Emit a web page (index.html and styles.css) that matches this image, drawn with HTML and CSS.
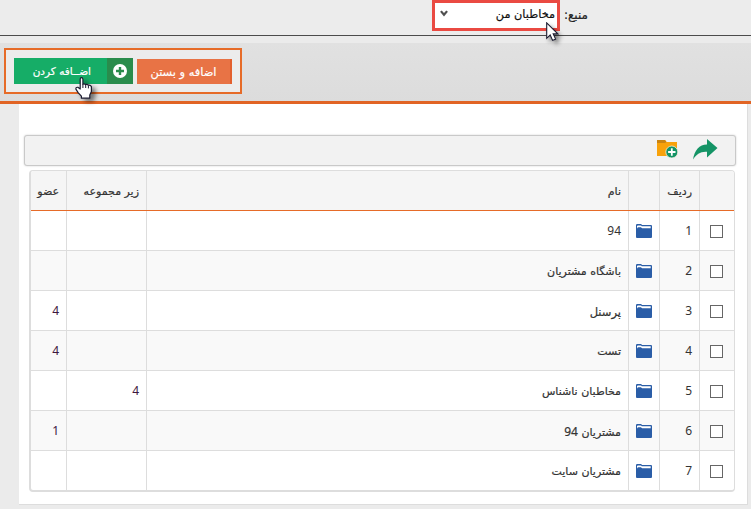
FILE: index.html
```html
<!DOCTYPE html>
<html lang="fa" dir="rtl">
<head>
<meta charset="utf-8">
<title>مخاطبان من</title>
<link rel="stylesheet" href="styles.css">
</head>
<body>
<svg class="defs" width="0" height="0">
  <symbol id="folder" viewBox="0 0 16 14">
    <path fill="#2a5da7" d="M0 1.2Q0 0 1.2 0H4.6Q5.6 0 6 1.1H15Q16 1.1 16 2.2V13Q16 14 15 14H1Q0 14 0 13Z"/>
    <path fill="#fff" d="M1 4.3V2.2Q1 1.4 2 1.4H4.7Q5.4 1.4 5.8 2.3H14.7V4.2H6.2Q5.5 4.2 5.1 3.2H2.2Q1.4 3.2 1.4 4.3Z"/>
  </symbol>
  <symbol id="pointer" viewBox="0 0 13 20">
    <path fill="#fff" stroke="#1b1b30" stroke-width="1.1" d="M.7.9V16.3L4.2 13 6.6 18.4 9.6 17.1 7.2 11.9H11.8Z"/>
  </symbol>
  <symbol id="hand" viewBox="0 0 18 22">
    <path fill="#fff" stroke="#1b1b30" stroke-width="1.2" stroke-linejoin="round" d="M5.2 12V2.2Q5.2.7 6.5.7T7.9 2.2V7.2Q9.2 6.2 10.6 7.6 12 6.7 13.3 8.2 15.4 7.8 16.4 9.6V14.6L14.8 18V21.2H6.4V19.2L3.3 15.8.9 12.2Q.6 10 2.9 10.3Z"/>
    <path fill="none" stroke="#1b1b30" d="M7.9 7V11M10.7 8V11M13.4 8.4V11.4"/>
  </symbol>
</svg>
<header class="source">
  <label class="source-label"><span class="t">منبع:</span></label>
  <div class="select">
    <span class="t">مخاطبان من</span>
    <svg width="8" height="7" viewBox="0 0 8 7"><path d="M.9 1.1 4 4.8 7.1 1.1" fill="none" stroke="#505050" stroke-width="2.2"/></svg>
    <svg class="pointer" width="13" height="20"><use href="#pointer"/></svg>
  </div>
</header>
<div class="actions">
  <div class="group">
    <button class="btn close"><span class="t">اضافه و بستن</span></button>
    <button class="btn add">
      <span class="plus"><svg width="14" height="14" viewBox="0 0 14 14"><circle cx="7" cy="7" r="7" fill="#fff"/><path d="M7 3V11M3 7H11" stroke="#2a8c4c" stroke-width="2.4"/></svg></span>
      <span class="caption"><span class="t">اضــافه کردن</span></span>
    </button>
    <svg class="hand" width="18" height="22"><use href="#hand"/></svg>
  </div>
</div>
<main class="panel">
  <div class="toolbar">
    <svg width="25" height="21" viewBox="0 0 25 21"><path fill="#159466" d="M0 20.5C1.5 11 6.5 5.3 14 5.4V0L24.5 9 14 18.5V12.7C7.5 12.2 3.5 15 0 20.5Z"/></svg>
    <svg width="21" height="18" viewBox="0 0 21 18"><path fill="#f8a20b" d="M0 0H8L9.5 2H20V16H0Z"/><path fill="#c98412" d="M0 0H8L9.5 2 8 3H0Z"/><circle cx="14.8" cy="12" r="6" fill="#159466" stroke="#f2eedf" stroke-width=".8"/><path d="M14.8 8.3V15.7M11.1 12H18.5" stroke="#fff" stroke-width="1.8"/></svg>
  </div>
  <div class="table">
    <div class="row head"><div></div><div><span class="t">ردیف</span></div><div></div><div><span class="t">نام</span></div><div><span class="t">زیر مجموعه</span></div><div><span class="t">عضو</span></div></div>
    <div class="row"><div><i class="check"></i></div><div class="num">1</div><div><svg class="folder"><use href="#folder"/></svg></div><div class="num">94</div><div></div><div></div></div>
    <div class="row"><div><i class="check"></i></div><div class="num">2</div><div><svg class="folder"><use href="#folder"/></svg></div><div><span class="t">باشگاه مشتریان</span></div><div></div><div></div></div>
    <div class="row"><div><i class="check"></i></div><div class="num">3</div><div><svg class="folder"><use href="#folder"/></svg></div><div><span class="t wide">پرسنل</span></div><div></div><div class="num link">4</div></div>
    <div class="row"><div><i class="check"></i></div><div class="num">4</div><div><svg class="folder"><use href="#folder"/></svg></div><div><span class="t">تست</span></div><div></div><div class="num link">4</div></div>
    <div class="row"><div><i class="check"></i></div><div class="num">5</div><div><svg class="folder"><use href="#folder"/></svg></div><div><span class="t">مخاطبان ناشناس</span></div><div class="num link">4</div><div></div></div>
    <div class="row"><div><i class="check"></i></div><div class="num">6</div><div><svg class="folder"><use href="#folder"/></svg></div><div><span class="t">مشتریان <b class="num">94</b></span></div><div></div><div class="num link">1</div></div>
    <div class="row"><div><i class="check"></i></div><div class="num">7</div><div><svg class="folder"><use href="#folder"/></svg></div><div><span class="t">مشتریان سایت</span></div><div></div><div></div></div>
  </div>
</main>
</body>
</html>
```
FILE: styles.css
```css
* { box-sizing: border-box; }
body { margin: 0; height: 509px; overflow: hidden; background: #ebebeb; color: #333; font: 11px/16px "DejaVu Sans", sans-serif; }
.defs { position: absolute; }
.t { white-space: nowrap; -webkit-text-stroke: .2px currentColor; }
.wide { font-size: 11.5px; }
.source { height: 36px; display: flex; align-items: flex-start; padding-right: 163px; border-bottom: 1px solid #4b4b4b; background: #ececec; color: #222; }
.source-label { width: 28px; padding-top: 7px; font-size: 12px; }
.select { position: relative; width: 128px; height: 31px; display: flex; align-items: center; justify-content: space-between; padding: 0 2px 1px 5px; background: #fff; border: 3px solid #ea4a42; color: #111; font-size: 11.3px; }
.select > svg:not(.pointer) { margin-bottom: 3px; }
.pointer { position: absolute; left: 111px; top: 19px; filter: drop-shadow(3px 3px 2px #0007); }
.actions { height: 68px; padding: 5px 0 0 4px; border-top: 7px solid #ebebeb; border-bottom: 3px solid #e16424; background: linear-gradient(#e1e1e1, #dcdcdc); direction: ltr; }
.group { position: relative; width: 238px; height: 46px; border: 2px solid #e66b28; background: #ececec; display: flex; flex-direction: row-reverse; justify-content: flex-end; gap: 4px; padding: 8px; }
.btn { border: 0; padding: 0; color: #fff; font: 11.4px/16px "DejaVu Sans", sans-serif; direction: rtl; }
.close { width: 95px; height: 25px; margin-top: 1px; background: #e87345; border-right: 2px solid #e3602e; }
.add { width: 119px; height: 26px; display: flex; background: #16ad67; font-size: 10.5px; }
.plus { width: 26px; height: 26px; display: grid; place-items: center; background: #2a8c4c; }
.caption { flex: 1; padding: 5px 16px 0 0; text-align: right; }
.hand { position: absolute; left: 69px; top: 27px; z-index: 1; filter: drop-shadow(4px 3px 2px #0007); }
.panel { width: 729px; height: 401px; margin-right: 3px; padding: 31px 11px 0 5px; background: #fff; border-right: 1px solid #ddd; border-bottom: 1px solid #ddd; }
.toolbar { height: 31px; width: 712px; display: flex; align-items: center; gap: 15px; padding: 0 17px 3px; border: 1px solid #c9c9c9; border-radius: 3px; background: #f2f2f2; box-shadow: 0 0 2px #ccc; }
.table { width: 706px; height: 322px; margin: 4px 1px 0 0; border: 1px solid #ddd; border-left-width: 2px; border-bottom-width: 2px; border-radius: 4px; overflow: hidden; }
.row { display: grid; grid-template-columns: 35px 40px 31px 482px 80px 35px; height: 40px; border-bottom: 1px solid #ddd; }
.row:nth-child(odd) { background: #f9f9f9; }
.row.head { background: #f5f5f5; border-bottom-color: #e66b28; }
.row:last-child { border-bottom: 0; }
.row > div { min-width: 0; padding: 13px 7px 0 0; border-left: 1px solid #ddd; }
.row > div:last-child { border-left: 0; }
.row > .num { padding-top: 12px; }
.num { font: 12px/16px "Noto Sans", sans-serif; }
.link { color: #3d1740; }
.check { display: block; width: 13px; height: 13px; margin: 1px 4px 0 0; border: 1px solid #666; background: #fff; }
.folder { display: block; width: 16px; height: 14px; }
```
